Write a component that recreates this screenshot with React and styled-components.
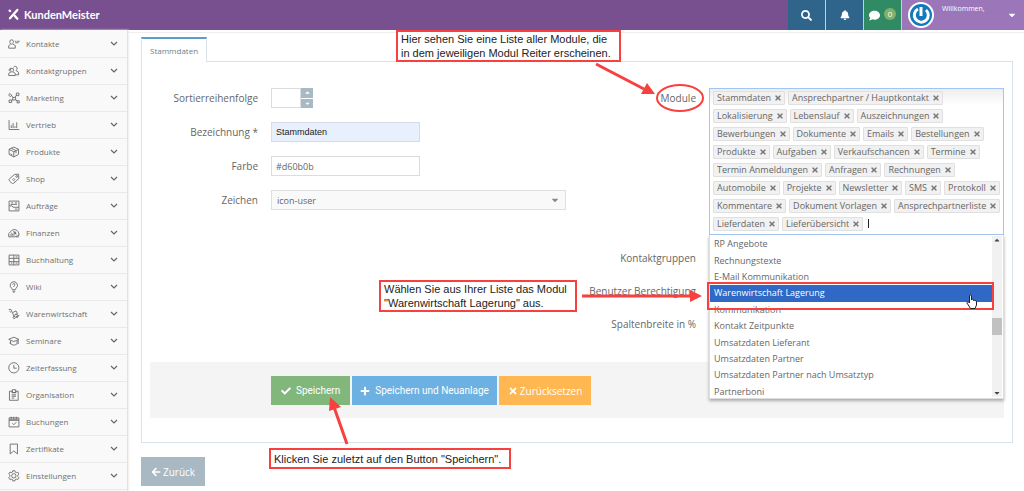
import { useState } from 'react';
import styled, { createGlobalStyle } from 'styled-components';
import {
  FaArrowLeft,
  FaBell,
  FaCaretDown,
  FaCaretUp,
  FaCheck,
  FaComment,
  FaPlus,
  FaSearch,
  FaTimes,
} from 'react-icons/fa';

const GlobalStyle = createGlobalStyle`
  :root {
    --purple: #79508f;
    --border-color: #dbe3ea;
    --text-color: #666;
    --marker: #f8403f;
  }
  * {
    box-sizing: border-box;
  }
  body {
    margin: 0;
    background: #fff;
    color: var(--text-color);
    font-family: 'Open Sans', 'Noto Sans', sans-serif;
    font-size: 9px;
  }
  button,
  input,
  select {
    font: inherit;
    color: inherit;
    margin: 0;
  }
  ul {
    list-style: none;
    margin: 0;
    padding: 0;
  }
`;

const Page = styled.div`
  position: relative;
  min-height: 100vh;
  display: flex;
  flex-direction: column;
  overflow: hidden;
`;

/* header */

const Header = styled.header`
  display: flex;
  justify-content: space-between;
  height: 30px;
  background: var(--purple);
  color: #fff;
`;

const Brand = styled.a`
  display: flex;
  align-items: center;
  gap: 5px;
  padding: 0 0 2px 8px;
  color: inherit;
  text-decoration: none;
  font-family: Lato, sans-serif;
  font-size: 11px;
  font-weight: 700;
`;

const HeaderTools = styled.nav`
  display: flex;
`;

const HeaderButton = styled.button`
  display: flex;
  align-items: center;
  justify-content: center;
  gap: 4px;
  width: 38px;
  padding: 0;
  border: 0;
  border-right: 1px solid #c5cfdb;
  background: ${({ $color }) => $color};
  color: #fff;
  font-size: 11px;
  cursor: pointer;
`;

const Badge = styled.span`
  width: 12px;
  height: 12px;
  margin-bottom: 3px;
  border-radius: 50%;
  background: #82b06a;
  font-size: 8px;
  line-height: 12px;
`;

const UserMenu = styled.button`
  display: flex;
  align-items: center;
  width: 122px;
  padding: 0 7px 0 6px;
  border: 0;
  background: #9b77b9;
  color: #fff;
  cursor: pointer;
`;

const UserName = styled.span`
  flex: 1;
  align-self: flex-start;
  padding: 4px 0 0 8px;
  text-align: left;
  font-size: 7px;
  line-height: 10px;
`;

/* sidebar */

const Body = styled.div`
  display: flex;
  flex: 1;
`;

const Sidebar = styled.nav`
  flex: 0 0 128px;
  padding-top: 1px;
  background: #f9f9f9;
  border-right: 1px solid #e2e2e2;
  box-shadow: 1px 0 2px #eee;
`;

const MenuItem = styled.a`
  display: flex;
  align-items: center;
  gap: 6px;
  height: 27px;
  padding: 0 9px 2px 8px;
  border-bottom: 1px solid #e9e9e9;
  color: #707070;
  font-size: 8px;
  text-decoration: none;
`;

const MenuLabel = styled.span`
  flex: 1;
`;

const MenuIcon = styled.svg`
  width: 12px;
  height: 12px;
  margin-top: 1px;
  fill: none;
  stroke: #666;
  stroke-width: 2.4;
`;

const Chevron = styled.svg`
  width: 8px;
  height: 5px;
  fill: none;
  stroke: #666;
  stroke-width: 1.2;
`;

/* content */

const Main = styled.main`
  flex: 1;
  min-width: 0;
  margin-top: 2px;
  padding: 4px 11px 4px 13px;
  border-top: 1px solid #eee;
`;

const Tabs = styled.div`
  display: flex;
`;

const Tab = styled.button`
  position: relative;
  height: 25px;
  margin-bottom: -1px;
  padding: 0 8px;
  border: 1px solid var(--border-color);
  border-top: 2px solid #5b9ec9;
  border-bottom: 0;
  background: #fff;
  color: #6c7f8c;
  font-size: 8px;
`;

const Panel = styled.section`
  padding: 26px 8px 24px;
  border: 1px solid var(--border-color);
`;

const FormGrid = styled.div`
  display: grid;
  grid-template-columns: 1fr 1fr;
  gap: 22px;
`;

const FormColumn = styled.div`
  display: flex;
  flex-direction: column;
  gap: ${({ $gap }) => $gap}px;
`;

const Field = styled.div`
  display: grid;
  grid-template-columns: 108px 1fr;
  column-gap: 13px;
  min-height: 20px;
`;

const Label = styled.label`
  text-align: right;
  font-size: 10px;
  line-height: 20px;
  white-space: nowrap;
`;

const TextInput = styled.input`
  width: 149px;
  height: 20px;
  padding: 0 4px;
  border: 1px solid ${({ $filled }) => ($filled ? '#d5dde8' : '#dcdcdc')};
  background: ${({ $filled }) => ($filled ? '#e8f0fe' : '#fff')};
  ${({ $filled }) => $filled && `
    color: #222;
    font-family: 'Liberation Sans', Arial, sans-serif;
  `}
`;

const Spinner = styled.div`
  display: flex;
  width: 42px;
  height: 20px;
`;

const SpinnerInput = styled.input`
  flex: 1;
  min-width: 0;
  padding: 0 4px;
  border: 1px solid #dcdcdc;
`;

const SpinnerButtons = styled.div`
  display: flex;
  flex-direction: column;
  gap: 1px;
  width: 12px;
`;

const SpinnerButton = styled.button`
  display: flex;
  align-items: center;
  justify-content: center;
  flex: 1;
  min-height: 0;
  padding: 0;
  border: 0;
  background: #a9b9c4;
  color: #fff;
  font-size: 7px;
`;

const SelectBox = styled.div`
  display: grid;
  align-items: center;
  height: 20px;
  border: 1px solid #dedede;
  background: #f9f9f9;
  > * {
    grid-area: 1 / 1;
  }
  > svg {
    justify-self: end;
    margin-right: 5px;
    color: #888;
    pointer-events: none;
  }
`;

const Select = styled.select`
  width: 100%;
  height: 18px;
  padding: 0 5px;
  border: 0;
  background: none;
  appearance: none;
`;

const MultiSelect = styled.div`
  position: relative;
`;

const ChipBox = styled.div`
  display: flex;
  flex-wrap: wrap;
  gap: 4px 3px;
  padding: 2px 1px 3px 3px;
  border: 1px solid #a3c5f3;
  background: linear-gradient(#eee, #fff 16px);
`;

const Chip = styled.span`
  display: flex;
  align-items: center;
  gap: 3px;
  height: 14px;
  padding: 0 2px 0 3px;
  border: 1px solid #e0e0e0;
  border-radius: 1px;
  background: #f1f1f1;
  line-height: 12px;
  white-space: nowrap;
`;

const ChipRemove = styled.button`
  display: flex;
  padding: 0;
  border: 0;
  background: none;
  color: #777;
  font-size: 8px;
`;

const ChipInput = styled.input`
  width: 12px;
  height: 14px;
  padding: 0;
  border: 0;
  outline: 0;
  background: none;
`;

const Caret = styled.span`
  width: 1px;
  height: 9px;
  margin: 2px 0 0 2px;
  background: #222;
`;

const Dropdown = styled.div`
  position: absolute;
  top: 100%;
  left: 0;
  right: 0;
  display: flex;
  height: 164px;
  padding: 1px 1px 1px 0;
  border: 1px solid #ddd;
  border-top: 0;
  background: #fff;
  box-shadow: 0 2px 3px #aaa;
  z-index: 1;
`;

const OptionViewport = styled.div`
  flex: 1;
  overflow: hidden;
`;

const OptionList = styled.ul`
  display: grid;
  grid-auto-rows: 1fr;
  height: 164px;
`;

const Option = styled.li`
  display: flex;
  align-items: center;
  padding-left: 4px;
  background: ${({ $active }) => ($active ? '#2f68c5' : 'none')};
  color: ${({ $active }) => ($active ? '#fff' : 'inherit')};
  line-height: 12px;
`;

const ScrollTrack = styled.div`
  display: flex;
  flex-direction: column;
  align-items: center;
  justify-content: space-between;
  width: 10px;
  background: #f1f1f1;
  color: #444;
  font-size: 8px;
`;

const ScrollThumb = styled.div`
  width: 10px;
  height: 17px;
  margin-top: 20px;
  background: #c1c1c1;
`;

const Actions = styled.div`
  display: flex;
  gap: 2px;
  margin-top: 28px;
  padding: 14px 0 13px 121px;
  background: #f4f4f4;
`;

const Button = styled.button`
  display: flex;
  align-items: center;
  justify-content: center;
  gap: ${({ $gap }) => $gap || 2}px;
  height: 29px;
  padding: 0 ${({ $pad }) => $pad || 10}px;
  border: 0;
  background: ${({ $color }) => $color};
  color: #fff;
  font-family: ${({ $plain }) => ($plain ? "Roboto, 'Liberation Sans', sans-serif" : 'inherit')};
  font-size: 10px;
  white-space: nowrap;
  cursor: pointer;
`;

const BackRow = styled.div`
  display: flex;
  margin-top: 14px;
`;

/* tutorial markers, lying over the page */

const Callout = styled.p`
  position: absolute;
  top: ${({ $top }) => $top}px;
  left: ${({ $left }) => $left}px;
  z-index: 2;
  display: grid;
  align-content: center;
  min-height: 21px;
  margin: 0;
  padding: 0 8px 0 3px;
  border: 2px solid var(--marker);
  background: #fff;
  color: #222;
  font: 11px/14px 'Liberation Sans', Arial, sans-serif;
  white-space: pre;
`;

const Drawing = styled.svg`
  position: absolute;
  top: ${({ $top }) => $top}px;
  left: ${({ $left }) => $left}px;
  z-index: 2;
  pointer-events: none;
`;

const Frame = styled.div`
  position: absolute;
  top: 47px;
  left: -3px;
  right: 9px;
  height: 28px;
  border: 2px solid var(--marker);
  pointer-events: none;
`;

const HandCursor = styled.svg`
  position: absolute;
  top: 59px;
  right: 26px;
  width: 11px;
  height: 15px;
`;

const MENU = [
  ['Kontakte', <path key="i" d="M10 5a5 5 0 0 1 5 5c0 4-2 7-5 7s-5-3-5-7a5 5 0 0 1 5-5zM7 17l-5 4v7h18v-7l-6-4M19 9h4m2 0h7M20 13h9" />],
  ['Kontaktgruppen', <path key="i" d="M11 9a4 4 0 0 1 4 5c0 3-1 5-4 5s-4-2-4-5a4 4 0 0 1 4-5zM15 6c3-4 10-3 10 3 0 3-1 5-3 6l7 5v7h-8M8 19l-6 4v6h18v-6l-6-4M4 17c-2-4 0-8 4-8" />],
  ['Marketing', <path key="i" d="M5 4l5 5-4 4-4-5zM23 3h7v7h-7zM13 15h8v7h-8zM3 22h7v7H3zM25 24h6v6h-6zM9 9l5 6M23 9l-4 6M13 21l-4 3M21 21l4 4" />],
  ['Vertrieb', <path key="i" d="M3 3v26h28M9 25v-8M14 25V11M19 25v-5M24 25V9" />],
  ['Produkte', <path key="i" d="M16 3l13 6v14l-13 7-13-7V9zM3 9l13 7 13-7M16 16v14M9 6l13 7v7M7 22l5 2" />],
  ['Shop', <path key="i" d="M18 4l11-1 1 12-14 13c-2 2-5 1-6 0l-6-7c-2-2-1-4 0-5zM24 7a2 2 0 1 1 0 5 2 2 0 0 1 0-5zM12 17l6 6M15 14l5 5" />],
  ['Aufträge', <path key="i" d="M3 3h27v27H3zM3 16h8l3 4h16M9 8h5M19 8h6M7 12h18M19 25h7" />],
  ['Finanzen', <path key="i" d="M2 18c7-9 13-13 20-10 5 2 8 7 8 12M2 18v9h17l11-4v-4M8 15l6 7M14 10l9 10M5 22h13M17 14h4v5h-4zM22 27h8" />],
  ['Buchhaltung', <path key="i" d="M3 3h27v27H3zM3 12h27M3 21h27M16 3v27M8 25h4M21 25h5M21 8h5" />],
  ['Wiki', <path key="i" d="M16 2a10 10 0 0 1 6 18l-2 4h-8l-2-4A10 10 0 0 1 16 2zM12 28h8M14 31h4M13 10c0-4 6-4 6 0 0 3-3 2-3 6" />],
  ['Warenwirtschaft', <path key="i" d="M2 4h6l9 20M14 12l8-4 4 8-9 4M20 17l8 3-2 6-5-1M17 23a3 3 0 1 1 0 6 3 3 0 0 1 0-6zM4 9l4 3M22 24l9-3" />],
  ['Seminare', <path key="i" d="M2 12l14-6 14 6-14 6zM7 16v8c5 5 13 5 18 0v-8M28 13v12M4 22h5" />],
  ['Zeiterfassung', <path key="i" d="M16 2a14 14 0 1 1 0 28 14 14 0 0 1 0-28zM16 8v9h8" />],
  ['Organisation', <path key="i" d="M4 6h7v4h11V6h6v25H4zM12 2h9v8h-9zM10 16h12M10 20h12M10 25h7" />],
  ['Buchungen', <path key="i" d="M3 5h27v25H3zM3 12h27M9 2v6M16 2v6M23 2v6M12 20l4 4 7-7M4 9h25" />],
  ['Zertifikate', <path key="i" d="M6 3h20v27l-10-8-10 8z" />],
  ['Einstellungen', <path key="i" d="M13 2h6l1 4 3 1 4-1 3 5-3 3v4l3 3-3 5-4-1-3 1-1 4h-6l-1-4-3-1-4 1-3-5 3-3v-4l-3-3 3-5 4 1 3-1zM16 10a6 6 0 1 1 0 12 6 6 0 0 1 0-12z" />],
];

const MODULES = [
  'Stammdaten', 'Ansprechpartner / Hauptkontakt', 'Lokalisierung', 'Lebenslauf',
  'Auszeichnungen', 'Bewerbungen', 'Dokumente', 'Emails', 'Bestellungen',
  'Produkte', 'Aufgaben', 'Verkaufschancen', 'Termine', 'Termin Anmeldungen',
  'Anfragen', 'Rechnungen', 'Automobile', 'Projekte', 'Newsletter', 'SMS',
  'Protokoll', 'Kommentare', 'Dokument Vorlagen', 'Ansprechpartnerliste',
  'Lieferdaten', 'Lieferübersicht',
];

const OPTIONS = [
  'RP Angebote', 'Rechnungstexte', 'E-Mail Kommunikation',
  'Warenwirtschaft Lagerung', 'Kommunikation', 'Kontakt Zeitpunkte',
  'Umsatzdaten Lieferant', 'Umsatzdaten Partner',
  'Umsatzdaten Partner nach Umsatztyp', 'Partnerboni',
];

const TopBar = () => (
  <Header>
    <Brand href="#">
      <svg width="11" height="13" viewBox="0 0 33 39" fill="none" stroke="#fff" strokeLinecap="round">
        <path d="M28 6L6 31" strokeWidth="7" />
        <path d="M20 23l8 9" strokeWidth="7" />
        <path d="M5 8l1 1" strokeWidth="7" />
      </svg>
      KundenMeister
    </Brand>
    <HeaderTools>
      <HeaderButton type="button" $color="#2f658b" aria-label="Suche"><FaSearch /></HeaderButton>
      <HeaderButton type="button" $color="#2f658b" aria-label="Meldungen"><FaBell size={10} /></HeaderButton>
      <HeaderButton type="button" $color="#308a64" aria-label="Nachrichten">
        <FaComment />
        <Badge>0</Badge>
      </HeaderButton>
      <UserMenu type="button">
        <svg width="26" height="26" viewBox="0 0 26 26" fill="none">
          <circle cx="13" cy="13" r="13" fill="#fff" />
          <circle cx="13" cy="13" r="11" fill="#1279ba" />
          <path d="M10 7a7 7 0 1 0 8 1" stroke="#fff" strokeWidth="3" />
          <path d="M13 5v9" stroke="#fff" strokeWidth="3" />
        </svg>
        <UserName>Willkommen,</UserName>
        <FaCaretDown size={10} />
      </UserMenu>
    </HeaderTools>
  </Header>
);

const ModulePicker = () => {
  const [modules, setModules] = useState(MODULES);

  return (
    <MultiSelect>
      <ChipBox>
        {modules.map((name) => (
          <Chip key={name}>
            {name}
            <ChipRemove
              type="button"
              aria-label={`${name} entfernen`}
              onClick={() => setModules(modules.filter((item) => item !== name))}
            >
              <FaTimes />
            </ChipRemove>
          </Chip>
        ))}
        <Caret />
        <ChipInput id="module" />
      </ChipBox>
      <Dropdown>
        <OptionViewport>
          <OptionList role="listbox" aria-label="Module">
            {OPTIONS.map((name, index) => (
              <Option key={name} role="option" aria-selected={index === 3} $active={index === 3}>
                {name}
              </Option>
            ))}
          </OptionList>
        </OptionViewport>
        <ScrollTrack>
          <FaCaretUp />
          <ScrollThumb />
          <FaCaretDown />
        </ScrollTrack>
        <Frame />
        <HandCursor viewBox="0 0 22 30" fill="#fff" stroke="#222" strokeWidth="2">
          <path d="M7 18V4c0-3 4-3 4 0v8c0-2 4-2 4 1 0-2 3-1 3 1 1-2 3 0 3 2v6l-3 7H9L2 18c-1-2 2-4 5 0z" />
        </HandCursor>
      </Dropdown>
    </MultiSelect>
  );
};

const MasterDataForm = () => (
  <Panel>
    <FormGrid>
      <FormColumn $gap={14}>
        <Field>
          <Label htmlFor="order">Sortierreihenfolge</Label>
          <Spinner>
            <SpinnerInput id="order" />
            <SpinnerButtons>
              <SpinnerButton type="button" aria-label="Erhöhen"><FaCaretUp /></SpinnerButton>
              <SpinnerButton type="button" aria-label="Verringern"><FaCaretDown /></SpinnerButton>
            </SpinnerButtons>
          </Spinner>
        </Field>
        <Field>
          <Label htmlFor="title">Bezeichnung *</Label>
          <TextInput id="title" $filled defaultValue="Stammdaten" />
        </Field>
        <Field>
          <Label htmlFor="color">Farbe</Label>
          <TextInput id="color" defaultValue="#d60b0b" />
        </Field>
        <Field>
          <Label htmlFor="sign">Zeichen</Label>
          <SelectBox>
            <Select id="sign">
              <option>icon-user</option>
            </Select>
            <FaCaretDown size={10} />
          </SelectBox>
        </Field>
      </FormColumn>
      <FormColumn $gap={13}>
        <Field>
          <Label htmlFor="module">Module</Label>
          <ModulePicker />
        </Field>
        <Field><Label as="span">Kontaktgruppen</Label></Field>
        <Field><Label as="span">Benutzer Berechtigung</Label></Field>
        <Field><Label as="span">Spaltenbreite in %</Label></Field>
      </FormColumn>
    </FormGrid>
    <Actions>
      <Button type="submit" $plain $gap={5} $color="#82b77c">
        <FaCheck />
        Speichern
      </Button>
      <Button type="button" $plain $gap={5} $pad={8} $color="#6cb1e1">
        <FaPlus />
        Speichern und Neuanlage
      </Button>
      <Button type="reset" $pad={9} $color="#ffb752">
        <FaTimes />
        Zurücksetzen
      </Button>
    </Actions>
  </Panel>
);

const Markers = () => (
  <>
    <Callout $top={30} $left={396}>
      {'Hier sehen Sie eine Liste aller Module, die\nin dem jeweiligen Modul Reiter erscheinen.'}
    </Callout>
    <Drawing $top={62} $left={594} width="112" height="52" fill="none" stroke="#f8403f">
      <path d="M2 2l48 25" strokeWidth="3" />
      <path d="M61 32l-14 0 6-11z" fill="#f8403f" stroke="none" />
      <ellipse cx="86" cy="36" rx="23" ry="13" strokeWidth="2" />
    </Drawing>
    <Callout $top={280} $left={379}>
      {'Wählen Sie aus Ihrer Liste das Modul\n"Warenwirtschaft Lagerung" aus.'}
    </Callout>
    <Drawing $top={289} $left={582} width="122" height="14">
      <path d="M0 7h112" stroke="#f8403f" strokeWidth="3" />
      <path d="M120 7l-12-6v12z" fill="#f8403f" />
    </Drawing>
    <Callout $top={448} $left={269}>Klicken Sie zuletzt auf den Button &quot;Speichern&quot;.</Callout>
    <Drawing $top={397} $left={326} width="24" height="50">
      <path d="M21 47L8 10" stroke="#f8403f" strokeWidth="3" />
      <path d="M4 0l11 10-12 4z" fill="#f8403f" />
    </Drawing>
  </>
);

const App = () => (
  <Page>
    <GlobalStyle />
    <TopBar />
    <Body>
      <Sidebar>
        {MENU.map(([label, icon]) => (
          <MenuItem key={label} href="#">
            <MenuIcon viewBox="0 0 33 33">{icon}</MenuIcon>
            <MenuLabel>{label}</MenuLabel>
            <Chevron viewBox="0 0 8 5"><path d="M1 1l3 3 3-3" /></Chevron>
          </MenuItem>
        ))}
      </Sidebar>
      <Main>
        <Tabs>
          <Tab type="button">Stammdaten</Tab>
        </Tabs>
        <MasterDataForm />
        <BackRow>
          <Button type="button" $color="#a9b9c3">
            <FaArrowLeft />
            Zurück
          </Button>
        </BackRow>
      </Main>
    </Body>
    <Markers />
  </Page>
);

export default App;
